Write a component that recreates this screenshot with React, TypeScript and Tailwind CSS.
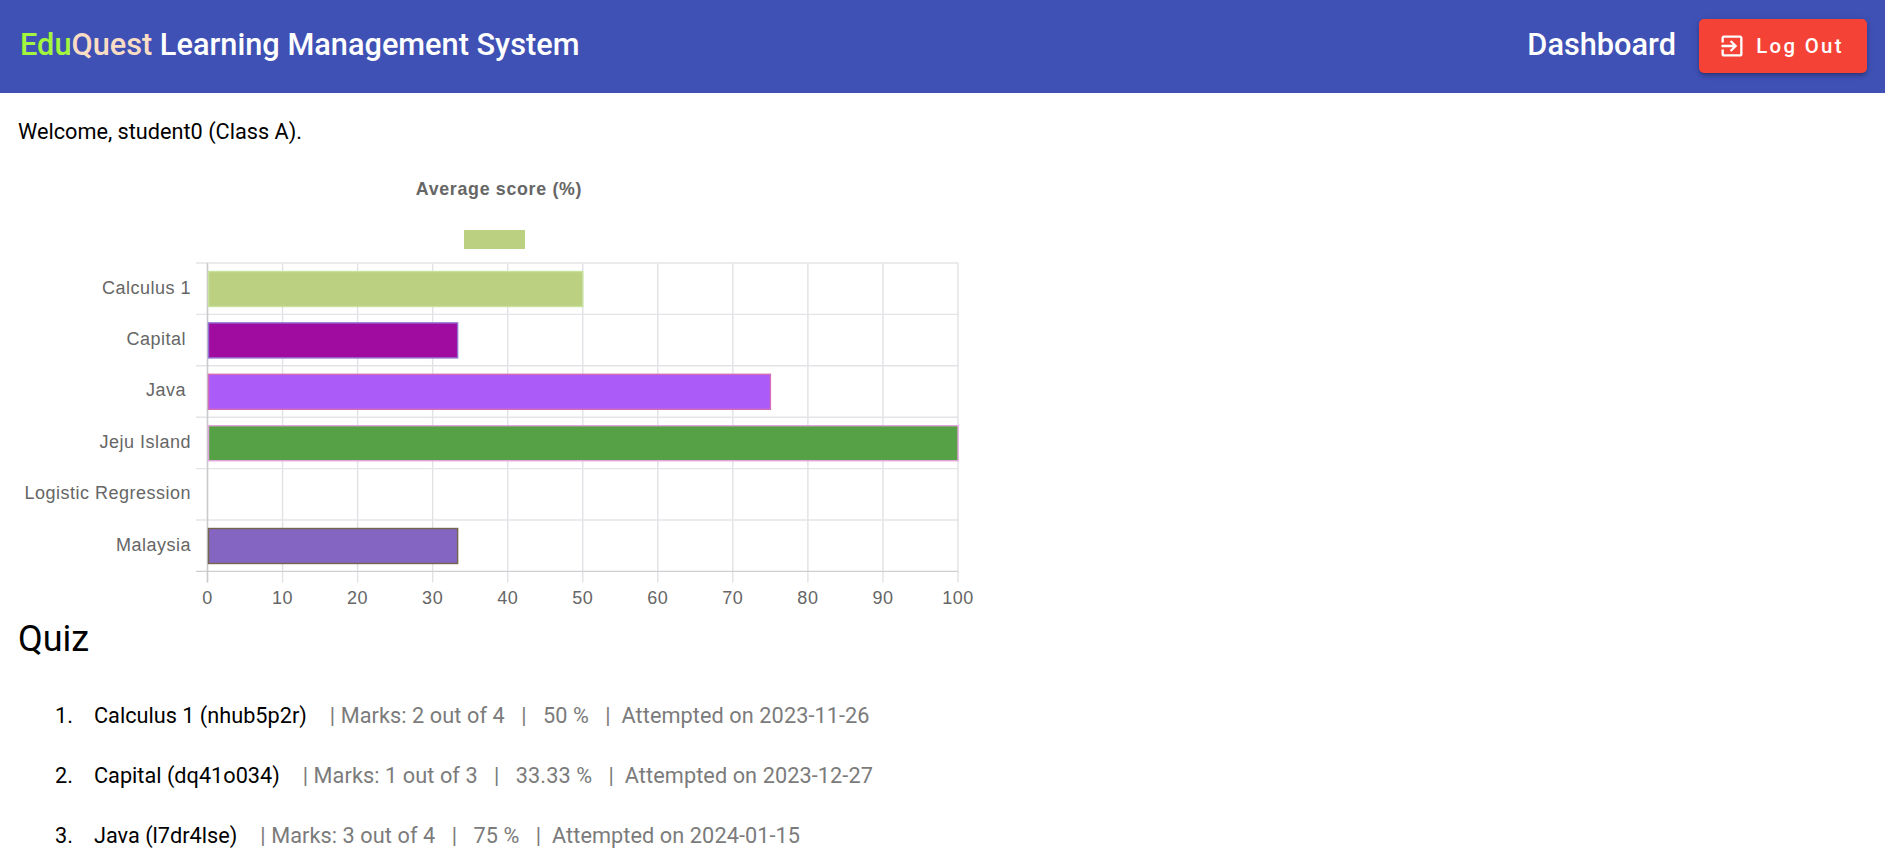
const roboto = "font-['Roboto',sans-serif]"

const bars = [
  { label: 'Calculus 1', value: 50, fill: '#bcd082', stroke: '#c6e29c', labelX: 191 },
  { label: 'Capital', value: 33.33, fill: '#a00ba0', stroke: '#9070d0', labelX: 186 },
  { label: 'Java', value: 75, fill: '#ab5cf8', stroke: '#d46cb8', labelX: 186 },
  { label: 'Jeju Island', value: 100, fill: '#56a046', stroke: '#e3a3dc', labelX: 191 },
  { label: 'Logistic Regression', value: 0, fill: 'none', stroke: 'none', labelX: 191 },
  { label: 'Malaysia', value: 33.33, fill: '#8466c2', stroke: '#75654a', labelX: 191 },
]

const quizzes = [
  { name: 'Calculus 1 (nhub5p2r)', marks: '2 out of 4', percent: '50 %', date: '2023-11-26' },
  { name: 'Capital (dq41o034)', marks: '1 out of 3', percent: '33.33 %', date: '2023-12-27' },
  { name: 'Java (l7dr4lse)', marks: '3 out of 4', percent: '75 %', date: '2024-01-15' },
]

const ticks = [0, 10, 20, 30, 40, 50, 60, 70, 80, 90, 100]

function ScoreChart() {
  const left = 207.5
  const right = 958
  const top = 263
  const rowH = 51.4
  const scale = (right - left) / 100
  const bottom = top + rowH * 6

  return (
    <svg width="1000" height="460" viewBox="0 160 1000 460" className="block mt-[14px]">
      <g fontFamily="'Liberation Sans', Arial, sans-serif" fill="#666666">
        <text x="499" y="195" textAnchor="middle" fontSize="17.8" fontWeight="700" letterSpacing="0.7">
          Average score (%)
        </text>
        <rect x="464" y="230" width="61" height="19" fill="#bcd082" />

        {ticks.map((t) => (
          <line key={t} x1={left + t * scale} x2={left + t * scale} y1={top} y2={bottom + 11} stroke="#e2e2e6" strokeWidth="1.4" />
        ))}
        {bars.map((_, i) => (
          <line key={i} x1="196" x2={right} y1={top + i * rowH} y2={top + i * rowH} stroke="#e4e4e8" strokeWidth="1.4" />
        ))}
        <line x1="196" x2={right} y1={bottom} y2={bottom} stroke="#cfcfd2" strokeWidth="1.4" />
        <line x1={left} x2={left} y1={top} y2={bottom + 11} stroke="#c9c9cc" strokeWidth="1.4" />

        {bars.map((b, i) =>
          b.value > 0 ? (
            <rect
              key={b.label}
              x={left + 1}
              y={top + i * rowH + 8.5}
              width={b.value * scale - 1}
              height="35"
              fill={b.fill}
              stroke={b.stroke}
              strokeWidth="1.4"
            />
          ) : null,
        )}

        {bars.map((b, i) => (
          <text key={b.label} x={b.labelX} y={top + i * rowH + 30.5} textAnchor="end" fontSize="18" letterSpacing="0.5">
            {b.label}
          </text>
        ))}
        {ticks.map((t) => (
          <text key={t} x={left + t * scale} y={603.5} textAnchor="middle" fontSize="18" letterSpacing="0.55">
            {t}
          </text>
        ))}
      </g>
    </svg>
  )
}

function App() {
  return (
    <div className={`h-[862px] overflow-hidden bg-white text-black ${roboto}`}>
      <header className="flex h-[93px] items-center justify-between bg-[#3f51b5] pl-[20px] pr-[18px] text-white">
        <h1 className="-mt-[2px] text-[30.72px] font-medium leading-none">
          <span className="text-[#a2f63e]">Edu</span>
          <span className="text-[#f9dcc4]">Quest</span> Learning Management System
        </h1>
        <div className="flex items-center gap-[23px]">
          <span className="-mt-[2px] text-[30.72px] font-medium leading-none">Dashboard</span>
          <button className="flex h-[54px] w-[168px] -mt-[1px] items-center justify-center gap-[10px] rounded-[5px] bg-[#f44336] pr-[4px] text-[20.4px] font-medium tracking-[2.3px] shadow-[0_3px_3px_-2px_rgba(0,0,0,0.2),0_3px_4px_0_rgba(0,0,0,0.14),0_1px_8px_0_rgba(0,0,0,0.12)]">
            <svg width="28" height="28" viewBox="0 0 24 24" fill="currentColor">
              <path d="M10.09 15.59L11.5 17l5-5-5-5-1.41 1.41L12.67 11H3v2h9.67l-2.58 2.59zM19 3H5c-1.11 0-2 .9-2 2v4h2V5h14v14H5v-4H3v4c0 1.1.89 2 2 2h14c1.1 0 2-.9 2-2V5c0-1.1-.9-2-2-2z" />
            </svg>
            Log Out
          </button>
        </div>
      </header>

      <main className="px-[18px]">
        <p className="pt-[24px] text-[21.7px] leading-[29px]">Welcome, student0 (Class A).</p>
        <div className="-ml-[18px]">
          <ScoreChart />
        </div>
        <h2 className="text-[36px] leading-[42px] -mt-[2px]">Quiz</h2>
        <ol className="mt-[41px] flex flex-col gap-[31px] pl-[37px] text-[21.7px] leading-[29px]">
          {quizzes.map((q, i) => (
            <li key={q.name} className="flex">
              <span className="w-[39px]">{i + 1}.</span>
              <span className="flex gap-[23px] text-[#7b7b7b]">
                <span className="text-black">{q.name}</span>
                <span className="whitespace-pre tracking-[0.08px]">
                  {`| Marks: ${q.marks}   |   ${q.percent}   |  Attempted on ${q.date}`}
                </span>
              </span>
            </li>
          ))}
        </ol>
      </main>
    </div>
  )
}

export default App
